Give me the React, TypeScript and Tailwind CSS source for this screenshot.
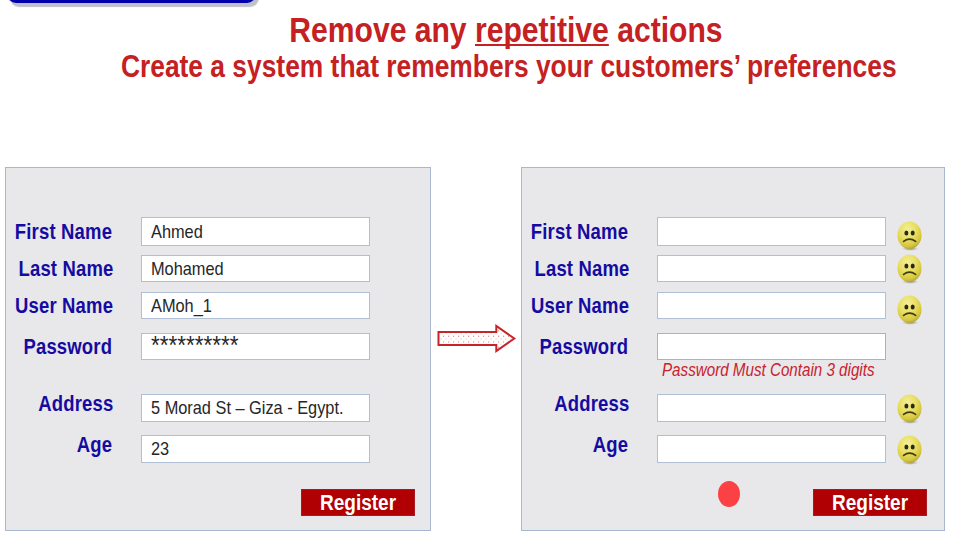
type Field = {
  label: string;
  value: string;
  row: string;
  labelShift: string;
  faceShift: string | null;
};

const fields: Field[] = [
  { label: "First Name", value: "Ahmed", row: "h-[29px]", labelShift: "mr-[2px]", faceShift: "mt-[4px]" },
  { label: "Last Name", value: "Mohamed", row: "mt-[9px] h-[27px]", labelShift: "mr-0", faceShift: "mt-[-1px]" },
  { label: "User Name", value: "AMoh_1", row: "mt-[10px] h-[27px]", labelShift: "mr-px", faceShift: "mt-[3px]" },
  { label: "Password", value: "**********", row: "mt-[14px] h-[27px]", labelShift: "mr-[2px]", faceShift: null },
  { label: "Address", value: "5 Morad St – Giza - Egypt.", row: "mt-[34px] h-[28px]", labelShift: "mr-[1px] mb-[9px]", faceShift: "mt-0" },
  { label: "Age", value: "23", row: "mt-[13px] h-[28px]", labelShift: "mr-[2px] mb-[8px]", faceShift: "mt-0" },
];

function SadFace({ shift }: { shift: string }) {
  return (
    <svg className={`ml-[10px] h-[30px] w-[27px] shrink-0 ${shift}`} viewBox="0 0 27 30">
      <defs>
        <radialGradient id="face" cx="0.42" cy="0.3" r="0.7">
          <stop offset="0" stopColor="#f4ef9c" />
          <stop offset="0.5" stopColor="#e9df62" />
          <stop offset="0.85" stopColor="#d6c83e" />
          <stop offset="1" stopColor="#b9ab3c" />
        </radialGradient>
        <radialGradient id="shade">
          <stop offset="0" stopColor="#77735f" />
          <stop offset="1" stopColor="#aaa9a5" stopOpacity="0" />
        </radialGradient>
      </defs>
      <ellipse cx="14.2" cy="27.6" rx="8.5" ry="2.3" fill="url(#shade)" />
      <ellipse cx="13.5" cy="14.2" rx="12" ry="13.7" fill="url(#face)" />
      <ellipse cx="10.4" cy="12" rx="2" ry="2.5" fill="#2c2914" />
      <ellipse cx="16.7" cy="12" rx="2" ry="2.5" fill="#2c2914" />
      <path d="M7.6 20.4Q13.5 16 19.6 20.4" fill="none" stroke="#3f3a15" strokeWidth="1.7" strokeLinecap="round" />
    </svg>
  );
}

function Panel({ filled }: { filled: boolean }) {
  return (
    <section
      className={`flex h-[364px] flex-col border border-[#a9b6d0] bg-[#e8e7ea] pt-[49px] ${filled ? "w-[426px]" : "w-[424px]"}`}
    >
      {fields.map((f) => {
        const invalid = !filled && f.label === "Password";
        return (
          <div key={f.label} className={`flex shrink-0 ${f.row}`}>
            <div className="flex w-[108px] items-center justify-end">
              <span
                className={`origin-right scale-x-[0.86] text-[21.5px] leading-[22px] font-bold tracking-[0.2px] whitespace-nowrap text-[#160ba0] ${f.labelShift}`}
              >
                {f.label}
              </span>
            </div>
            <div
              className={`ml-[27px] flex w-[229px] shrink-0 items-center border border-solid bg-white pl-[9px] ${
                invalid ? "border-[#f29498]" : "border-[#b0bfd6]"
              }`}
            >
              {filled && (
                <span
                  className={`origin-left whitespace-nowrap text-[#262628] ${
                    f.label === "Password"
                      ? "mb-[4px] scale-x-[0.865] text-[26px] leading-none"
                      : "mb-px scale-x-[0.86] text-[19px] leading-[19px]"
                  }`}
                >
                  {f.value}
                </span>
              )}
            </div>
            {!filled && f.faceShift && <SadFace shift={f.faceShift} />}
          </div>
        );
      })}
      <div className={`mt-[26px] flex shrink-0 justify-end ${filled ? "pr-[15px]" : "pr-[17px]"}`}>
        {!filled && <div className="mt-[-8px] mr-[73px] h-[26px] w-[22px] rounded-[50%] bg-[#fc4144]" />}
        <button className="flex h-[27px] w-[114px] items-center justify-center border border-[#a51b25] bg-[#b00003]">
          <span className="scale-x-[0.865] text-[22px] leading-none font-bold text-white">Register</span>
        </button>
      </div>
    </section>
  );
}

function Arrow() {
  return (
    <svg className="mt-[156px] ml-[6px] h-[30px] w-[80px] shrink-0" viewBox="0 0 80 30">
      <defs>
        <pattern id="dots" width="5" height="5.6" patternUnits="userSpaceOnUse">
          <rect x="1" y="1.5" width="1.2" height="1.2" fill="#e58c8e" />
          <rect x="3.5" y="4.3" width="1.1" height="1.1" fill="#f0bebf" />
        </pattern>
      </defs>
      <path
        d="M1.5 9H59.3V3L77.3 15.5L59.3 28V22H1.5Z"
        fill="url(#dots)"
        stroke="#ca2226"
        strokeWidth="2"
      />
    </svg>
  );
}

export default function App() {
  return (
    <div className="relative h-[555px] w-[970px] overflow-hidden bg-white font-['Liberation_Sans',Arial,sans-serif]">
      <div className="absolute top-[-26px] left-[7px] h-[29px] w-[249px] rounded-[9px] bg-[#0000aa] shadow-[3px_4px_1px_#bfc0c8]" />
      <header className="flex h-[167px] flex-col items-center pt-[11px] pl-[48px] text-[#c52022]">
        <h1 className="mr-[6px] scale-x-[0.86] text-[35px] leading-[37px] font-bold whitespace-nowrap">
          Remove any{" "}
          <span className="underline decoration-[1.5px] underline-offset-[2px] [text-decoration-skip-ink:none]">
            repetitive
          </span>{" "}
          actions
        </h1>
        <h2 className="scale-x-[0.851] text-[31px] leading-[37px] font-bold whitespace-nowrap">
          Create a system that remembers your customers’ preferences
        </h2>
      </header>
      <main className="flex items-start pl-[5px]">
        <Panel filled />
        <Arrow />
        <div className="ml-[4px]">
          <Panel filled={false} />
        </div>
      </main>
      <p className="absolute top-[360px] left-[662px] origin-left scale-x-[0.843] text-[18px] leading-[20px] whitespace-nowrap text-[#c8222d] italic">
        Password Must Contain 3 digits
      </p>
    </div>
  );
}
